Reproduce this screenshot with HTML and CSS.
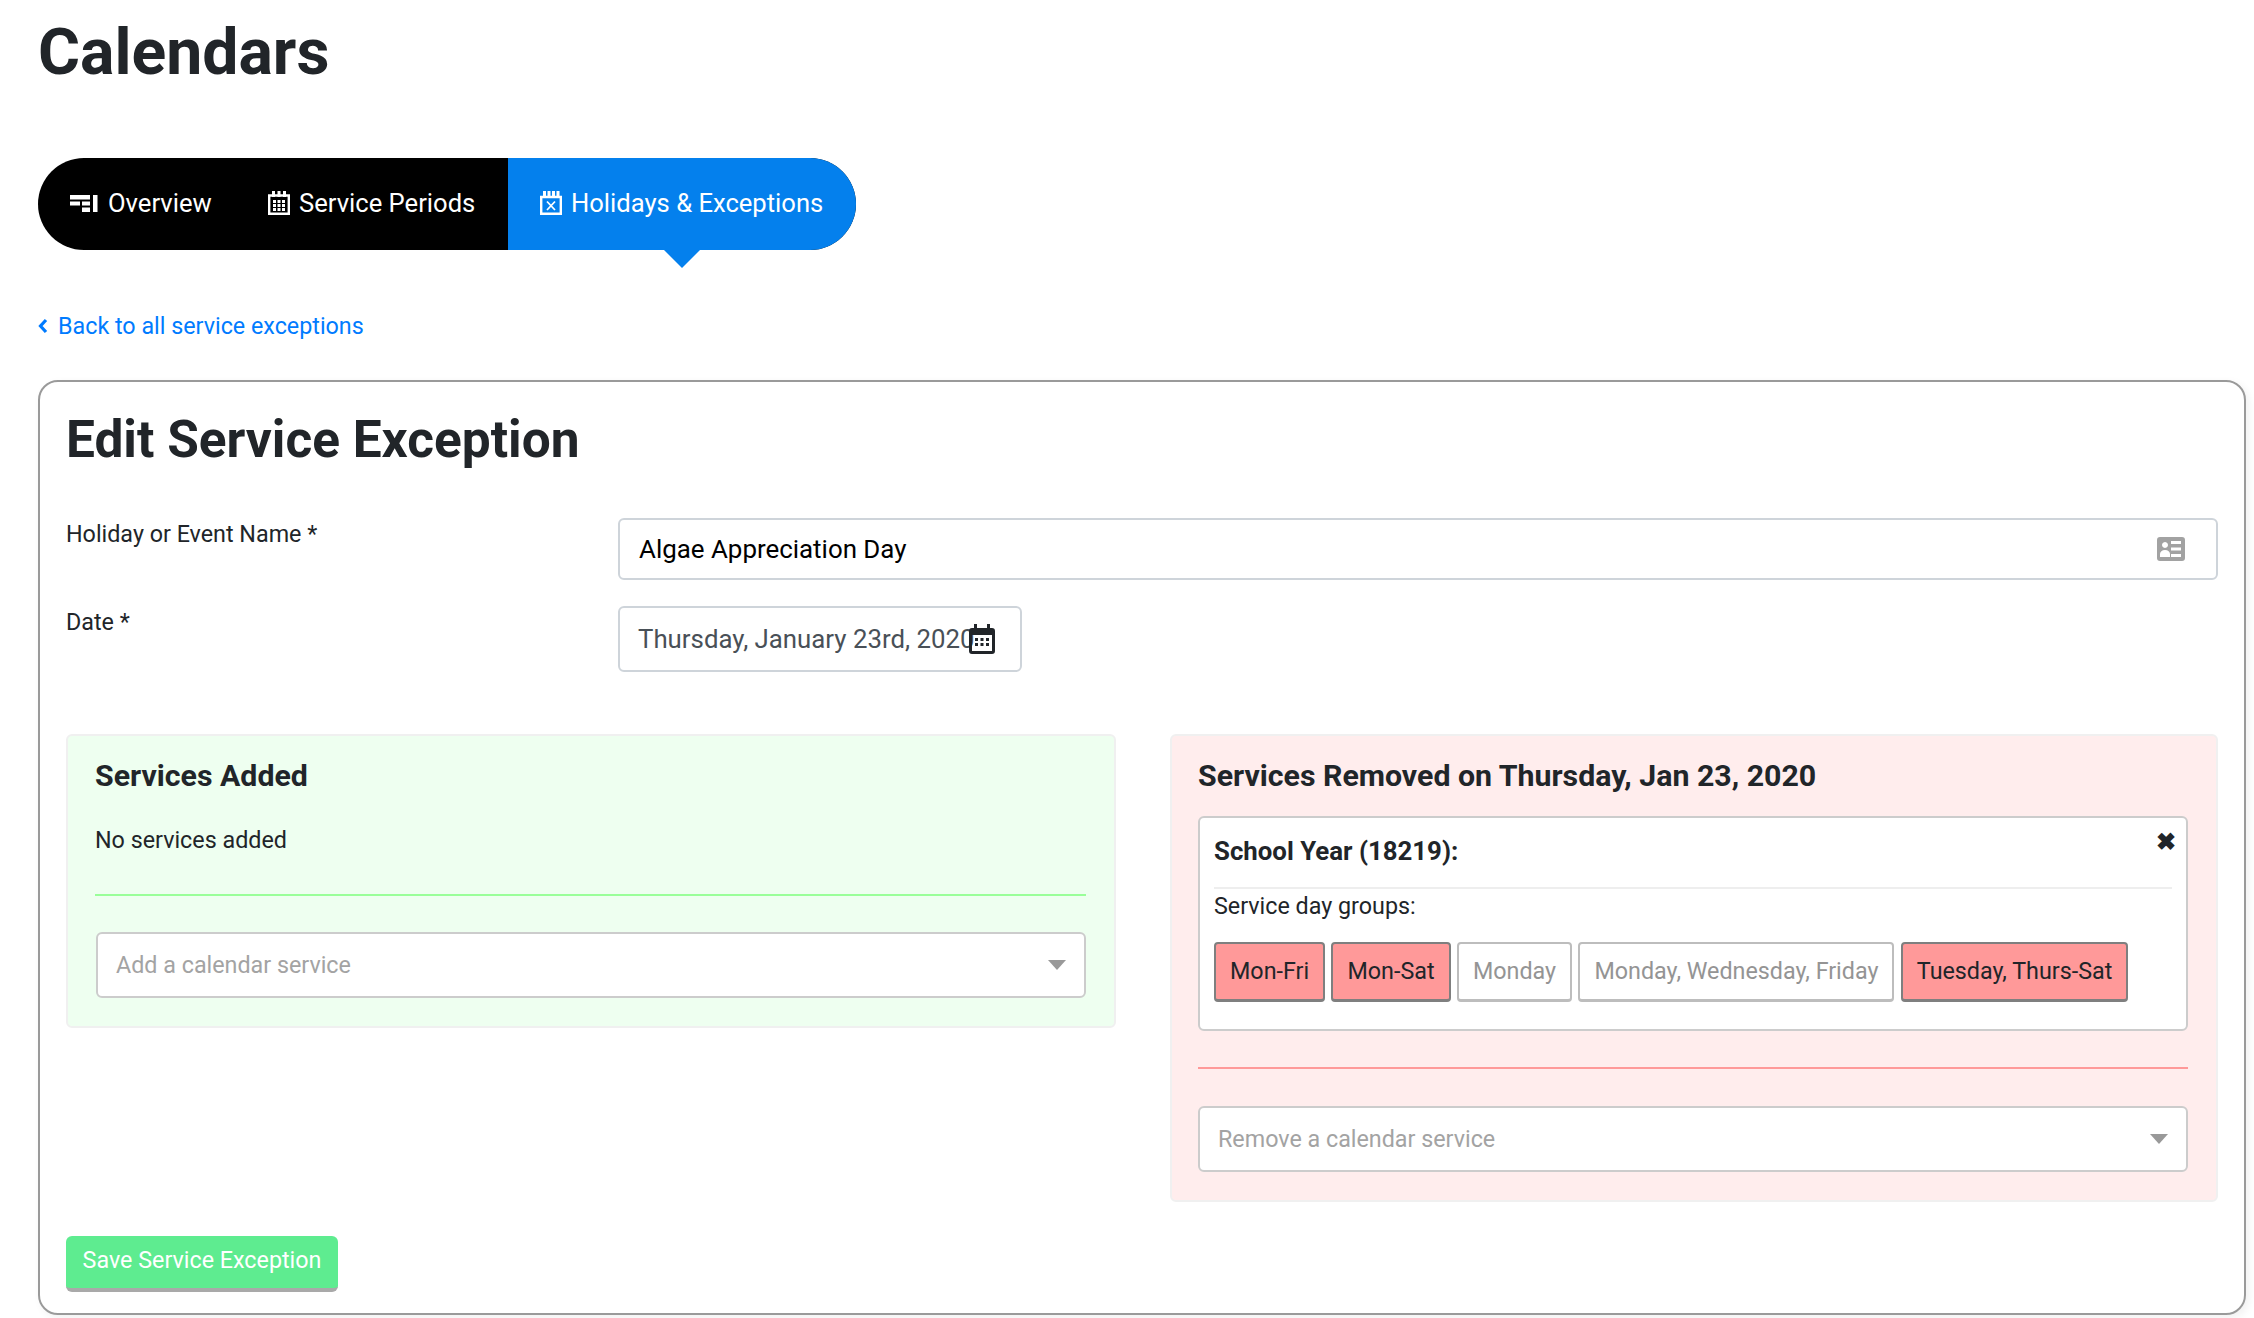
FILE: index.html
```html
<!DOCTYPE html>
<html lang="en">
<head>
<meta charset="utf-8">
<title>Calendars</title>
<link rel="stylesheet" href="styles.css">
</head>
<body>
<h1 class="title">Calendars</h1>
<nav class="tabs">
  <a class="tab tab-first"><svg class="tab-icon" viewBox="0 0 28 17"><path d="M0 0h20v4.500H0zM0 6.500h10v4H0zM12 6.500h8v4h-8zM12 12.500h8V17h-8zM23 0h4.500v17H23z" fill="#fff"/></svg>Overview</a>
  <a class="tab tab-second"><svg class="tab-icon cal" viewBox="0 0 22 24"><path d="M1.200 4.500h19.600v18.300H1.200z" fill="none" stroke="#fff" stroke-width="2.400"/><path d="M4 0h3v6H4zM9.500 0h3v6h-3zM15 0h3v6h-3z" fill="#fff"/><path d="M5 9h3v3H5zM9.500 9h3v3h-3zM14 9h3v3h-3zM5 13h3v3H5zM9.500 13h3v3h-3zM14 13h3v3h-3zM5 17h3v3H5zM9.500 17h3v3h-3zM14 17h3v3h-3z" fill="#fff"/></svg>Service Periods</a>
  <a class="tab tab-active"><svg class="tab-icon cal" viewBox="0 0 22 24"><path d="M1.200 6h19.600v16.800H1.200z" fill="none" stroke="#fff" stroke-width="2.400"/><path d="M3 0h3v6H3zM7.500 0h3v6h-3zM12 0h3v6h-3zM16.500 0h3v6h-3z" fill="#fff"/><path d="M7 10.500l8 8.500M15 10.500l-8 8.500" stroke="#fff" stroke-width="1.800" fill="none"/></svg>Holidays &amp; Exceptions</a>
</nav>
<a class="back"><svg class="back-icon" viewBox="0 0 10 16"><path d="M8 2L2.500 8 8 14" fill="none" stroke="#007bff" stroke-width="3.200"/></svg>Back to all service exceptions</a>
<main class="card">
  <h2 class="card-title">Edit Service Exception</h2>
  <div class="field field-name">
    <label class="label">Holiday or Event Name *</label>
    <div class="input input-name">
      <span>Algae Appreciation Day</span>
      <svg class="id-icon" viewBox="0 0 28 24"><path fill-rule="evenodd" d="M3 0h22a3 3 0 0 1 3 3v18a3 3 0 0 1-3 3H3a3 3 0 0 1-3-3V3a3 3 0 0 1 3-3zM14 4v3h10V4zM14 10.500v3h10v-3zM14 17v3h10v-3zM8 5a3 3 0 1 0 .01 0zM3 20h10v-3c0-2-2-4-5-4s-5 2-5 4z" fill="#a2a2a2"/></svg>
    </div>
  </div>
  <div class="field field-date">
    <label class="label">Date *</label>
    <div class="input input-date">
      <span>Thursday, January 23rd, 2020</span>
      <svg class="date-icon" viewBox="0 0 26 30"><path fill-rule="evenodd" d="M5 0h3v4h10V0h3v4h2a3 3 0 0 1 3 3v20a3 3 0 0 1-3 3H3a3 3 0 0 1-3-3V7a3 3 0 0 1 3-3h2zM3 11v16h20V11zM6 14h3v3H6zM11.500 14h3v3h-3zM17 14h3v3h-3zM6 19h3v3H6zM11.500 19h3v3h-3zM17 19h3v3h-3z" fill="#212529"/></svg>
    </div>
  </div>
  <div class="panels">
    <section class="panel panel-added">
      <h3 class="panel-title">Services Added</h3>
      <p class="empty">No services added</p>
      <hr class="rule rule-added">
      <div class="select"><span>Add a calendar service</span><i class="caret"></i></div>
    </section>
    <section class="panel panel-removed">
      <h3 class="panel-title">Services Removed on Thursday, Jan 23, 2020</h3>
      <div class="service">
        <div class="service-head">School Year (18219):<span class="close">✖</span></div>
        <p class="service-sub">Service day groups:</p>
        <div class="groups">
          <span class="group on">Mon-Fri</span>
          <span class="group on">Mon-Sat</span>
          <span class="group">Monday</span>
          <span class="group">Monday, Wednesday, Friday</span>
          <span class="group on">Tuesday, Thurs-Sat</span>
        </div>
      </div>
      <hr class="rule rule-removed">
      <div class="select select-removed"><span>Remove a calendar service</span><i class="caret"></i></div>
    </section>
  </div>
  <button class="save">Save Service Exception</button>
</main>
</body>
</html>
```
FILE: styles.css
```css
* { box-sizing: border-box; }
html, body { margin: 0; background: #fff; }
body {
  width: 2254px;
  height: 1318px;
  overflow: hidden;
  padding: 0 8px 0 38px;
  font-family: Roboto, "Liberation Sans", sans-serif;
  font-size: 23.3px;
  color: #212529;
}
.title {
  margin: 0;
  height: 158px;
  padding-top: 11px;
  font-size: 64.300px;
  font-weight: 700;
  line-height: 82px;
}
.tabs {
  display: flex;
  width: 818px;
  height: 92px;
  background: #000;
  border-radius: 46px;
}
.tab {
  display: flex;
  align-items: center;
  color: #fff;
  font-size: 25.6px;
  padding-bottom: 2px;
  white-space: nowrap;
}
.tab-first { padding-left: 32px; width: 216px; }
.tab-second { padding-left: 14px; width: 254px; }
.tab-active {
  position: relative;
  width: 348px;
  padding-left: 32px;
  background: #0480ed;
  border-radius: 0 46px 46px 0;
}
.tab-active::after {
  content: "";
  position: absolute;
  left: 156px;
  top: 92px;
  border: solid transparent;
  border-width: 18px 18px 0;
  border-top-color: #0480ed;
}
.tab-icon { width: 28px; height: 17px; margin-right: 10px; flex: none; }
.tab-icon.cal { width: 22px; height: 24px; margin-right: 9px; }
.back {
  display: flex;
  align-items: center;
  height: 34px;
  margin-top: 59px;
  color: #007bff;
}
.back-icon { width: 10px; height: 16px; margin-right: 10px; }
.card {
  margin-top: 37px;
  width: 2208px;
  height: 935px;
  padding: 0 26px;
  border: 2px solid #9a9a9a;
  border-radius: 20px;
  box-shadow: 3px 3px 8px rgba(0, 0, 0, .06);
}
.card-title {
  margin: 0;
  height: 136px;
  padding-top: 27px;
  font-size: 51.4px;
  font-weight: 700;
  line-height: 62px;
}
.field { display: flex; }
.field-name { height: 88px; }
.field-date { height: 128px; }
.label { width: 552px; flex: none; line-height: 30px; padding-top: 1px; }
.input {
  position: relative;
  display: flex;
  align-items: center;
  border: 2px solid #ced4da;
  border-radius: 6px;
  background: #fff;
}
.input-name {
  width: 1600px;
  height: 62px;
  padding: 0 19px;
  font-size: 25.9px;
  color: #000;
  justify-content: space-between;
}
.id-icon { width: 28px; height: 24px; margin-right: 12px; }
.input-date {
  width: 404px;
  height: 66px;
  padding: 0 18px;
  font-size: 25.8px;
  color: #495057;
  white-space: nowrap;
}
.date-icon {
  position: absolute;
  left: 349px;
  top: 16px;
  width: 26px;
  height: 30px;
}
.panels { display: flex; justify-content: space-between; align-items: flex-start; height: 502px; }
.panel {
  padding-top: 22px;
  border: 2px solid #f0f0f0;
  border-radius: 6px;
}
.panel-added { width: 1050px; height: 294px; padding-left: 27px; padding-right: 28px; background: #eefff0; }
.panel-removed { width: 1048px; height: 468px; padding-left: 26px; padding-right: 28px; background: #ffeded; }
.panel-title {
  margin: 0;
  font-size: 30.3px;
  font-weight: 700;
  line-height: 36px;
}
.empty { margin: 31px 0 0; line-height: 30px; height: 30px; }
.rule { margin: 0; border: 0; height: 2px; }
.rule-added { margin-top: 39px; background: #99ff99; }
.rule-removed { margin-top: 36px; background: #ff9999; }
.select {
  display: flex;
  align-items: center;
  justify-content: space-between;
  margin-top: 36px;
  margin-left: 1px;
  height: 66px;
  padding: 0 18px 1px;
  background: #fff;
  border: 2px solid #cccccc;
  border-radius: 6px;
  color: #a3a3a3;
}
.select-removed { margin-top: 37px; margin-left: 0; }
.caret {
  width: 0;
  height: 0;
  border: solid transparent;
  border-width: 10px 9px 0;
  border-top-color: #999;
}
.service {
  margin-top: 22px;
  height: 215px;
  padding: 0 14px;
  background: #fff;
  border: 2px solid #cccccc;
  border-radius: 6px;
}
.service-head {
  position: relative;
  height: 71px;
  padding-top: 18px;
  line-height: 30px;
  font-size: 25.8px;
  font-weight: 700;
  border-bottom: 2px solid #eeeeee;
}
.close {
  position: absolute;
  right: -4px;
  top: 9px;
  font-size: 24px;
  color: #212529;
}
.service-sub { margin: 2px 0 0; line-height: 30px; }
.groups { display: flex; gap: 6.4px; margin-top: 21px; }
.group {
  display: flex;
  align-items: center;
  height: 60px;
  padding: 0 14px 2px;
  border: 2px solid #bdbdbd;
  border-bottom-width: 3px;
  border-radius: 4px;
  color: #949494;
  white-space: nowrap;
}
.group.on { background: #ff9999; border-color: #7f7f7f; color: #212529; }
.save {
  display: block;
  margin-top: 0;
  width: 272px;
  height: 56px;
  padding: 0 0 5px;
  border: 0;
  border-bottom: 4px solid #a9a9a9;
  border-radius: 6px;
  background: #5eec90;
  color: #fff;
  font-family: inherit;
  font-size: 23.3px;
}
```
